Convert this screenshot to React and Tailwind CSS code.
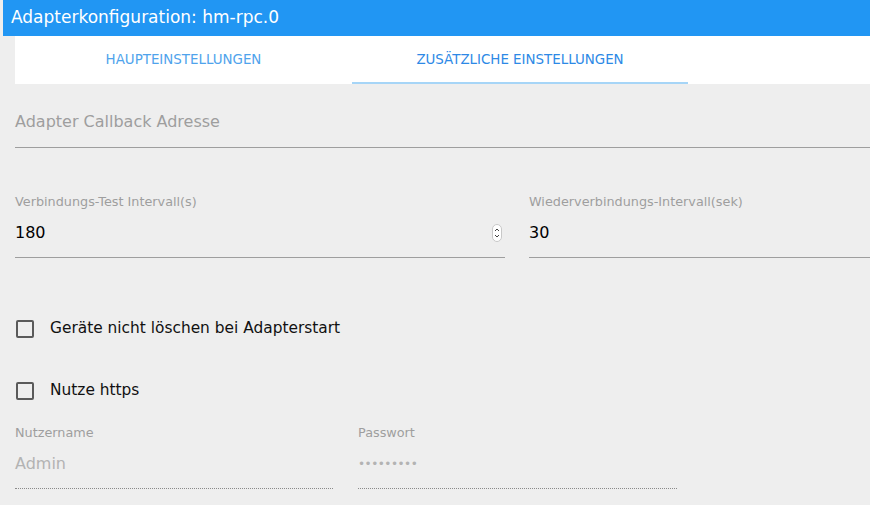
import React from 'react';

const font = { fontFamily: '"DejaVu Sans", "Liberation Sans", sans-serif' };

function Spinner() {
  return (
    <svg width="10" height="18" viewBox="0 0 10 18" className="mr-[3px]">
      <rect x="0.5" y="0.5" width="9" height="17" rx="4.5" fill="#fff" stroke="#c8c8c8" />
      <path d="M3 7 L5 5 L7 7" fill="none" stroke="#444" strokeWidth="1" />
      <path d="M3 11 L5 13 L7 11" fill="none" stroke="#444" strokeWidth="1" />
    </svg>
  );
}

function Field({ label, value, placeholder, dotted, spinner, password, className = '' }) {
  return (
    <div className={`flex flex-col ${className}`}>
      <label className="flex h-[14px] items-center text-[12.8px] text-[#9e9e9e]">{label}</label>
      <div className="flex h-[48px] items-center">
        <span
          className={`flex-1 ${password ? 'text-[12px] tracking-[-0.5px]' : 'text-[16px]'} ${
            value ? 'text-black' : 'text-[#b3b3b3]'
          }`}
        >
          {value || placeholder}
        </span>
        {spinner && <Spinner />}
      </div>
      <div className={dotted ? 'border-b border-dotted border-[#8a8a8a]' : 'border-b border-[#9e9e9e]'} />
    </div>
  );
}

function Checkbox({ label }) {
  return (
    <label className="flex h-[25px] items-center gap-[16px] pl-[16px]">
      <span className="h-[18px] w-[18px] rounded-[2px] border-2 border-[#5a5a5a]" />
      <span className="text-[15.4px] text-[#111]">{label}</span>
    </label>
  );
}

export default function App() {
  return (
    <div className="h-[505px] w-[870px] overflow-hidden bg-[#eeeeee]" style={font}>
      <div className="ml-[3px] flex h-[36px] items-center bg-[#2196f3] pl-[8px] text-[17px] text-white">
        Adapterkonfiguration: hm-rpc.0
      </div>
      <div className="ml-[15px] flex h-[48px] bg-white">
        <button className="flex w-[337px] items-center justify-center text-[13.4px] text-[#4fa3ec]">
          HAUPTEINSTELLUNGEN
        </button>
        <button className="flex w-[336px] items-center justify-center border-b-[2px] border-[#a6d5f7] pt-[2px] text-[13.4px] text-[#2d89e6]">
          ZUSÄTZLICHE EINSTELLUNGEN
        </button>
      </div>
      <div className="pl-[15px]">
        <div className="flex h-[63px] items-center pt-[12px] text-[16px] text-[#9e9e9e]">
          Adapter Callback Adresse
        </div>
        <div className="border-b border-[#9e9e9e]" />
        <div className="mt-[47px] flex gap-[24px]">
          <Field className="w-[490px]" label="Verbindungs-Test Intervall(s)" value="180" spinner />
          <Field className="flex-1" label="Wiederverbindungs-Intervall(sek)" value="30" />
        </div>
        <div className="-ml-[15px] mt-[58px] flex flex-col gap-[37px]">
          <Checkbox label="Geräte nicht löschen bei Adapterstart" />
          <Checkbox label="Nutze https" />
        </div>
        <div className="mt-[23px] flex gap-[25px]">
          <Field className="w-[318px]" label="Nutzername" placeholder="Admin" dotted />
          <Field className="w-[319px]" label="Passwort" placeholder="•••••••••" dotted password />
        </div>
      </div>
    </div>
  );
}
